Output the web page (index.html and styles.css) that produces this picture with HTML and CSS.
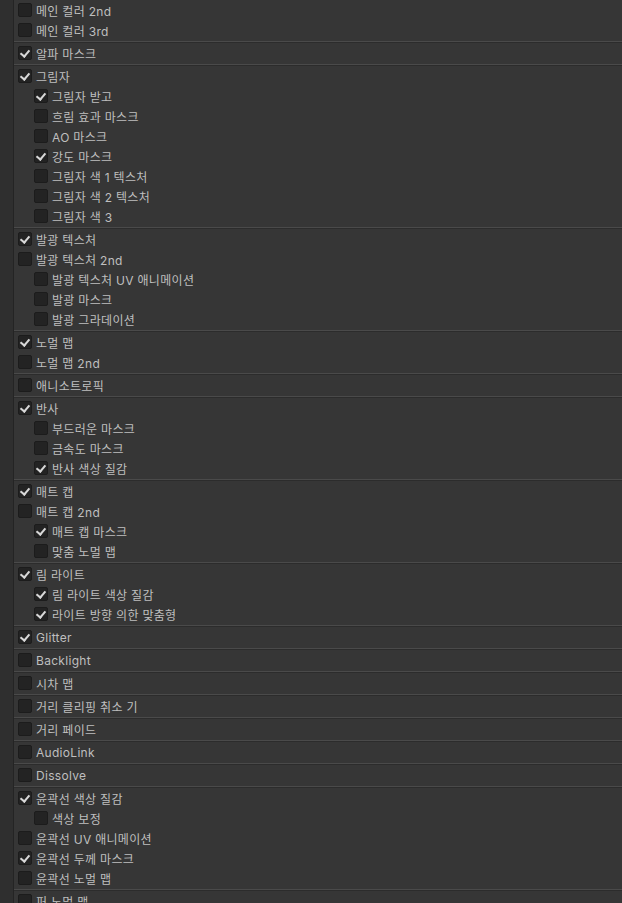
FILE: index.html
```html
<!DOCTYPE html>
<html lang="ko">
<head>
    <meta charset="UTF-8">
    <title>Shader Settings</title>
    <link rel="stylesheet" href="styles.css">
</head>
<body>
    <div class="side"></div>
    <div class="panel">
        <!-- Main color -->
        <div class="row"><span class="box"></span>메인 컬러 2nd</div>
        <div class="row"><span class="box"></span>메인 컬러 3rd</div>
        <div class="sep"></div>
        <div class="row"><span class="box on"></span>알파 마스크</div>
        <div class="sep"></div>
        <!-- Shadow -->
        <div class="row"><span class="box on"></span>그림자</div>
        <div class="row sub"><span class="box on"></span>그림자 받고</div>
        <div class="row sub"><span class="box"></span>흐림 효과 마스크</div>
        <div class="row sub"><span class="box"></span>AO 마스크</div>
        <div class="row sub"><span class="box on"></span>강도 마스크</div>
        <div class="row sub"><span class="box"></span>그림자 색 1 텍스처</div>
        <div class="row sub"><span class="box"></span>그림자 색 2 텍스처</div>
        <div class="row sub"><span class="box"></span>그림자 색 3</div>
        <div class="sep"></div>
        <!-- Emission -->
        <div class="row"><span class="box on"></span>발광 텍스처</div>
        <div class="row"><span class="box"></span>발광 텍스처 2nd</div>
        <div class="row sub"><span class="box"></span>발광 텍스처 UV 애니메이션</div>
        <div class="row sub"><span class="box"></span>발광 마스크</div>
        <div class="row sub"><span class="box"></span>발광 그라데이션</div>
        <div class="sep"></div>
        <div class="row"><span class="box on"></span>노멀 맵</div>
        <div class="row"><span class="box"></span>노멀 맵 2nd</div>
        <div class="sep"></div>
        <div class="row"><span class="box"></span>애니소트로픽</div>
        <div class="sep"></div>
        <!-- Reflection -->
        <div class="row"><span class="box on"></span>반사</div>
        <div class="row sub"><span class="box"></span>부드러운 마스크</div>
        <div class="row sub"><span class="box"></span>금속도 마스크</div>
        <div class="row sub"><span class="box on"></span>반사 색상 질감</div>
        <div class="sep"></div>
        <!-- MatCap -->
        <div class="row"><span class="box on"></span>매트 캡</div>
        <div class="row"><span class="box"></span>매트 캡 2nd</div>
        <div class="row sub"><span class="box on"></span>매트 캡 마스크</div>
        <div class="row sub"><span class="box"></span>맞춤 노멀 맵</div>
        <div class="sep"></div>
        <!-- Rim light -->
        <div class="row"><span class="box on"></span>림 라이트</div>
        <div class="row sub"><span class="box on"></span>림 라이트 색상 질감</div>
        <div class="row sub"><span class="box on"></span>라이트 방향 의한 맞춤형</div>
        <div class="sep"></div>
        <div class="row"><span class="box on"></span>Glitter</div>
        <div class="sep"></div>
        <div class="row"><span class="box"></span>Backlight</div>
        <div class="sep"></div>
        <div class="row"><span class="box"></span>시차 맵</div>
        <div class="sep"></div>
        <div class="row"><span class="box"></span>거리 클리핑 취소 기</div>
        <div class="sep"></div>
        <div class="row"><span class="box"></span>거리 페이드</div>
        <div class="sep"></div>
        <div class="row"><span class="box"></span>AudioLink</div>
        <div class="sep"></div>
        <div class="row"><span class="box"></span>Dissolve</div>
        <div class="sep"></div>
        <!-- Outline -->
        <div class="row"><span class="box on"></span>윤곽선 색상 질감</div>
        <div class="row sub"><span class="box"></span>색상 보정</div>
        <div class="row"><span class="box"></span>윤곽선 UV 애니메이션</div>
        <div class="row"><span class="box on"></span>윤곽선 두께 마스크</div>
        <div class="row"><span class="box"></span>윤곽선 노멀 맵</div>
        <div class="sep"></div>
        <div class="row"><span class="box"></span>퍼 노멀 맵</div>
    </div>
</body>
</html>
```

FILE: styles.css
```css
* {
    margin: 0;
    padding: 0;
    box-sizing: border-box;
}

body {
    display: flex;
    height: 903px;
    overflow: hidden;
    background: #363636;
    color: #bfbfbf;
    font-family: 'Inter', 'Noto Sans CJK KR', sans-serif;
    font-size: 12px;
    letter-spacing: 0.3px;
}

.side {
    width: 14px;
    flex-shrink: 0;
    background: #2f2f2f;
    border-right: 1px solid #242424;
}

.panel {
    flex: 1;
    display: flex;
    flex-direction: column;
}

.row {
    display: flex;
    align-items: center;
    height: 20px;
    flex-shrink: 0;
    padding-left: 4px;
    white-space: nowrap;
}

.row.sub {
    padding-left: 20px;
}

.box {
    position: relative;
    width: 14px;
    height: 14px;
    margin-right: 4px;
    flex-shrink: 0;
    background: #232323;
    border: 1px solid #1c1c1c;
    border-radius: 2px;
}

/* check mark */
.box.on::after {
    content: '';
    position: absolute;
    left: 3px;
    top: 1px;
    width: 4px;
    height: 7px;
    border-right: 2px solid #d8d8d8;
    border-bottom: 2px solid #d8d8d8;
    transform: rotate(40deg);
}

.sep {
    height: 3px;
    flex-shrink: 0;
    border-top: 1px solid #363636;
    border-bottom: 1px solid #2c2c2c;
    background: #4a4a4a;
}
```
